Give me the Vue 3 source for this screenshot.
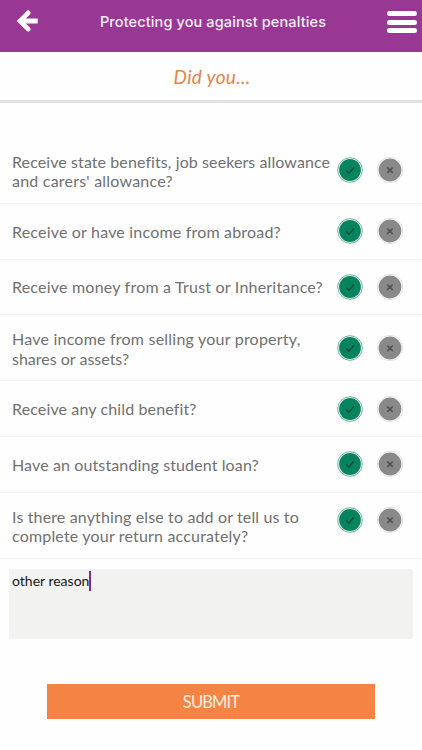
<script setup>
import { ref } from 'vue'

const questions = ref([
  { lines: ['Receive state benefits, job seekers allowance', "and carers' allowance?"], tracking: [0.09, 0.22], size: 'first' },
  { lines: ['Receive or have income from abroad?'], tracking: [0.19], size: 'single' },
  { lines: ['Receive money from a Trust or Inheritance?'], tracking: [0.21], size: 'single' },
  { lines: ['Have income from selling your property,', 'shares or assets?'], tracking: [0.22, 0], size: 'double' },
  { lines: ['Receive any child benefit?'], tracking: [0.13], size: 'single' },
  { lines: ['Have an outstanding student loan?'], tracking: [0.12], size: 'single' },
  { lines: ['Is there anything else to add or tell us to', 'complete your return accurately?'], tracking: [0.14, 0.18], size: 'last' },
])
</script>

<template>
  <div class="screen">
    <header class="bar">
      <svg class="back" width="22" height="24" viewBox="0 0 22 24">
        <path d="M11.200 3.800 3 12l8.200 8.200" fill="none" stroke="#fff" stroke-width="4.600" stroke-linecap="round" stroke-linejoin="miter" />
        <path d="M3.500 12H20.700" fill="none" stroke="#fff" stroke-width="5" />
      </svg>
      <h1 class="title">Protecting you against penalties</h1>
      <div class="menu"><i></i><i></i><i></i></div>
    </header>
    <div class="sub"><h2>Did you...</h2></div>
    <main class="list">
      <div v-for="(q, i) in questions" :key="i" class="row" :class="q.size">
        <p class="question">
          <span v-for="(line, n) in q.lines" :key="line" :style="{ letterSpacing: q.tracking[n] + 'px' }">{{ line }}</span>
        </p>
        <div class="choices">
          <svg width="28" height="28" viewBox="0 0 28 28">
            <circle cx="14" cy="14" r="12.300" fill="#fff" stroke="#58ac92" stroke-width="0.900" />
            <circle cx="14" cy="14" r="10.900" fill="#07845f" />
            <path d="M10.200 14.500l2.700 2.700 5.200-5.900" fill="none" stroke="#0c4f3c" stroke-width="1.300" />
          </svg>
          <svg width="28" height="28" viewBox="0 0 28 28">
            <circle cx="14" cy="14" r="12.700" fill="#fff" stroke="#dcdcdc" stroke-width="0.800" />
            <circle cx="14" cy="14" r="11.400" fill="#898989" />
            <path d="M11.300 11.500l5.400 5.400M16.700 11.500l-5.400 5.400" fill="none" stroke="#505050" stroke-width="1.600" />
          </svg>
        </div>
      </div>
    </main>
    <div class="reason"><span>other reason</span><i class="caret"></i></div>
    <button class="submit">SUBMIT</button>
  </div>
</template>

<style>
body { margin: 0; background: #fefefe; }
</style>

<style scoped>
.screen { width: 422px; height: 750px; overflow: hidden; background: #fefefe; font-family: Lato, sans-serif; display: flex; flex-direction: column; }
.bar { height: 52px; flex: none; background: #993894; box-sizing: border-box; padding: 0 5px 8px 17px; display: flex; align-items: center; justify-content: space-between; }
.back { flex: none; margin-bottom: 2px; }
.title { margin: 0; font: 500 14.5px/20px Inter, sans-serif; letter-spacing: 0.12px; color: #fbeffa; white-space: nowrap; }
.menu { width: 30px; display: flex; flex-direction: column; gap: 3.400px; }
.menu i { height: 5px; border-radius: 3px; background: #fff; }
.sub { height: 51px; flex: none; box-sizing: border-box; border-bottom: 3px solid #e6e0df; display: flex; justify-content: center; align-items: center; }
.sub h2 { margin: 2px 0 0 2px; font: italic 400 19px/24px Lato, sans-serif; letter-spacing: 0.3px; color: #e58445; }
.list { padding-top: 34px; flex: none; }
.row { box-sizing: border-box; border-bottom: 1.500px solid #f3f3f3; display: flex; align-items: center; justify-content: space-between; padding: 0 18px 0 12px; height: 55.700px; }
.first { height: 67px; }
.double { height: 66px; }
.last { height: 66px; }
.question { margin: 2px 0 0; font-size: 16px; line-height: 19.500px; color: #707070; white-space: nowrap; }
.single .question { margin-top: 0; }
.question span { display: block; }
.choices { width: 68px; flex: none; display: flex; justify-content: space-between; }
.last .choices { margin-bottom: 10px; }
.reason { margin: 10px 9px 0; height: 70px; flex: none; box-sizing: border-box; background: #f2f2f1; padding: 2px 3px; display: flex; align-items: flex-start; font-size: 14px; line-height: 20px; color: #161616; }
.caret { width: 2px; height: 20px; background: #7e2c86; }
.submit { margin: 45px 0 0 47px; width: 328px; height: 35px; flex: none; border: 0; padding: 2px 0 0; background: #f48344; color: #fff0df; font: 400 16.5px/20px Lato, sans-serif; letter-spacing: -0.85px; }
</style>
